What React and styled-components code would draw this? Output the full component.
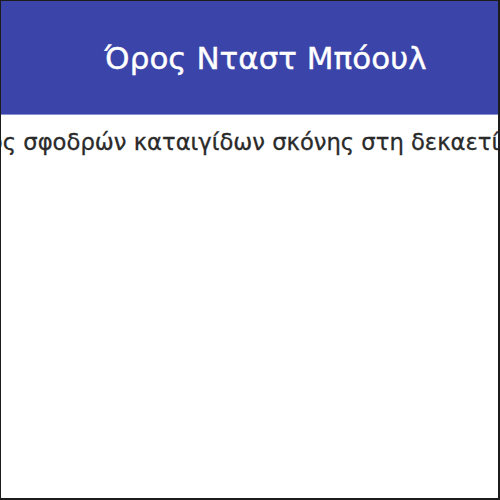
import React from "react";
import styled, { createGlobalStyle } from "styled-components";

const GlobalStyle = createGlobalStyle`
  html, body {
    margin: 0;
    padding: 0;
    background: #ffffff;
  }
`;

const Frame = styled.div`
  box-sizing: border-box;
  width: 500px;
  height: 500px;
  border: 1px solid #1c1c1c;
  border-right-width: 2px;
  border-bottom-width: 2px;
  overflow: hidden;
  display: flex;
  flex-direction: column;
  background: #ffffff;
`;

const Header = styled.header`
  height: 113px;
  flex-shrink: 0;
  background: #3b44a9;
  border-bottom: 1px solid #8a90d2;
  display: flex;
  align-items: center;
  justify-content: center;
  padding-left: 32px;
`;

const Title = styled.h1`
  margin: 0;
  color: #ffffff;
  font-family: "DejaVu Sans", Verdana, sans-serif;
  font-weight: normal;
  font-size: 31px;
  -webkit-text-stroke: 0.4px #ffffff;
`;

const Body = styled.div`
  display: flex;
  justify-content: center;
  padding-top: 14px;
`;

const Lead = styled.p`
  margin: 0;
  padding-right: 24px;
  white-space: nowrap;
  flex-shrink: 0;
  font-family: "DejaVu Sans", Verdana, sans-serif;
  font-size: 22.7px;
  color: #2a2a2a;
  -webkit-text-stroke: 0.3px #2a2a2a;
`;

export default function App() {
  return (
    <>
      <GlobalStyle />
      <Frame>
        <Header>
          <Title>Όρος Νταστ Μπόουλ</Title>
        </Header>
        <Body>
          <Lead>περίοδος σφοδρών καταιγίδων σκόνης στη δεκαετία του</Lead>
        </Body>
      </Frame>
    </>
  );
}
